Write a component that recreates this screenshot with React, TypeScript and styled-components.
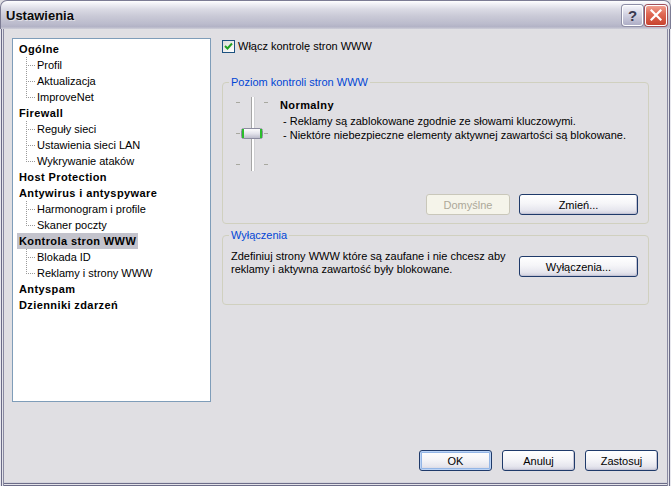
import React from "react";
import styled, { createGlobalStyle, css } from "styled-components";

const FONT = `"Liberation Sans", "DejaVu Sans", Arial, sans-serif`;

const GlobalStyle = createGlobalStyle`
  html, body { margin: 0; padding: 0; background: #e0dfe3; }
  body { font-family: ${FONT}; font-size: 11px; color: #000; }
  * { box-sizing: border-box; }
`;

const Window = styled.div`
  width: 671px;
  height: 486px;
  display: flex;
  flex-direction: column;
  background: #e0dfe3;
  overflow: hidden;
`;

const TitleBar = styled.div`
  flex: none;
  height: 29px;
  display: flex;
  align-items: center;
  padding: 0 3px 0 5px;
  border: 1px solid #7c7c94;
  border-bottom: none;
  border-radius: 7px 7px 0 0;
  background: linear-gradient(
    to bottom,
    #ffffff 0%,
    #f1f1f6 10%,
    #dadae4 30%,
    #c9c9d6 55%,
    #bcbccd 80%,
    #b3b3c6 92%,
    #cfcfd9 100%
  );
`;

const TitleText = styled.div`
  flex: 1;
  font: bold 13px ${FONT};
  color: #0a0a0a;
  text-shadow: 1px 1px 0 rgba(255, 255, 255, 0.5);
`;

const CapButton = styled.div<{ $close?: boolean }>`
  width: 21px;
  height: 21px;
  margin-left: 2px;
  border-radius: 3px;
  display: flex;
  align-items: center;
  justify-content: center;
  border: 1px solid #ffffff;
  box-shadow: 0 0 0 1px #8e8ea6;
  font: bold 15px ${FONT};
  color: #3a3a50;
  background: linear-gradient(to bottom, #f4f4fa 0%, #d2d2e2 45%, #aeaec6 100%);
  ${(p) =>
    p.$close &&
    css`
      width: 22px;
      box-shadow: 0 0 0 1px #a0505a;
      background: linear-gradient(to bottom, #f0a090 0%, #e06a55 40%, #c8432e 100%);
    `}
`;

const Body = styled.div`
  flex: 1;
  display: flex;
  flex-direction: column;
  padding: 9px 13px 15px 12px;
  box-shadow: inset 1px 0 0 #e8e8ee, inset 2px 0 0 #6c6c88, inset 3px 0 0 #e4e4ea,
    inset 4px 0 0 #8a8aa2, inset -1px 0 0 #e8e8ee, inset -2px 0 0 #6c6c88,
    inset -3px 0 0 #e4e4ea, inset -4px 0 0 #8a8aa2, inset 0 -1px 0 #6c6c88,
    inset 0 -2px 0 #e4e4ea, inset 0 -3px 0 #6c6c88, inset 0 -4px 0 #d4d4dc;
`;

const TopRow = styled.div`
  display: flex;
  gap: 11px;
  height: 364px;
`;

const Tree = styled.div`
  width: 199px;
  height: 364px;
  background: #fff;
  border: 1px solid #7f9db9;
  padding-top: 2px;
`;

const TreeRow = styled.div`
  height: 16px;
  display: flex;
  align-items: center;
  line-height: 16px;
  white-space: nowrap;
`;

const ParentLabel = styled.span<{ $selected?: boolean }>`
  margin-left: 4px;
  padding: 0 2px;
  font-weight: bold;
  letter-spacing: 0.4px;
  height: 16px;
  ${(p) => p.$selected && css`background: #c3c3cc;`}
`;

const DOT_V = "repeating-linear-gradient(to bottom, #9a9a9a 0 1px, transparent 1px 2px)";
const DOT_H = "repeating-linear-gradient(to right, #9a9a9a 0 1px, transparent 1px 2px)";

const Connector = styled.span<{ $last?: boolean }>`
  width: 11px;
  height: 16px;
  margin-left: 13px;
  flex: none;
  background-image: ${DOT_V}, ${DOT_H};
  background-repeat: no-repeat;
  background-position: 0 0, 0 8px;
  background-size: 1px ${(p) => (p.$last ? "9px" : "16px")}, 9px 1px;
`;

const ChildLabel = styled.span`
  padding-left: 0;
`;

const Main = styled.div`
  flex: 1;
  margin-right: 9px;
  display: flex;
  flex-direction: column;
`;

const CheckRow = styled.label`
  margin-top: 2px;
  height: 13px;
  display: flex;
  align-items: center;
  gap: 3px;
  line-height: 13px;
`;

const CheckBox = styled.span`
  width: 13px;
  height: 13px;
  flex: none;
  border: 1px solid #1c5180;
  background: linear-gradient(135deg, #dcdcd7 0%, #ffffff 100%);
  display: flex;
  align-items: center;
  justify-content: center;
`;

const Group = styled.section<{ $mt: number }>`
  margin-top: ${(p) => p.$mt}px;
  border: 1px solid #d0d0bf;
  border-radius: 4px;
  display: flex;
  flex-direction: column;
  align-items: stretch;
`;

const Legend = styled.span`
  align-self: flex-start;
  margin: -7px 0 0 6px;
  padding: 0 2px;
  color: #0046d5;
  line-height: 13px;
  height: 13px;
  background: #e0dfe3;
`;

const GroupBody = styled.div<{ $pad: string }>`
  padding: ${(p) => p.$pad};
`;

const SliderRow = styled.div`
  display: flex;
  gap: 11px;
`;

const LevelText = styled.div`
  padding-top: 1px;
`;

const LevelTitle = styled.div`
  font-weight: bold;
  letter-spacing: 0.4px;
  line-height: 14px;
`;

const LevelDesc = styled.div`
  margin-top: 2px;
  padding-left: 3px;
  line-height: 14px;
`;

const ButtonRow = styled.div<{ $mt?: number }>`
  display: flex;
  justify-content: flex-end;
  gap: 9px;
  margin-top: ${(p) => p.$mt ?? 0}px;
`;

const ExclRow = styled.div`
  display: flex;
  justify-content: space-between;
  align-items: flex-start;
`;

const ExclText = styled.div`
  line-height: 13px;
`;

const Button = styled.button<{ $w: number; $default?: boolean; $mt?: number }>`
  width: ${(p) => p.$w}px;
  height: 21px;
  margin-top: ${(p) => p.$mt ?? 0}px;
  padding: 0;
  font: 11px ${FONT};
  color: #000;
  border: 1px solid #1f3a6a;
  border-radius: 3px;
  background: linear-gradient(to bottom, #ffffff 0%, #f5f5f8 45%, #e6e6ee 80%, #d0d0de 100%);
  box-shadow: inset -1px -1px 0 #c4c4d4;
  ${(p) =>
    p.$default &&
    css`
      box-shadow: inset 0 0 0 1px #bcd4f6, inset 0 0 0 2px #94b6e6;
    `}
  &:disabled {
    color: #aca899;
    border-color: #c9c7ba;
    background: #f5f4ea;
    box-shadow: none;
  }
`;

const Footer = styled.div`
  margin-top: auto;
  display: flex;
  justify-content: flex-end;
  gap: 10px;
`;

const Slider = () => (
  <svg width="33" height="74" viewBox="0 0 33 74">
    <rect x="15" y="0" width="1" height="74" fill="#a6a6a6" />
    <rect x="16" y="0" width="2" height="74" fill="#ffffff" />
    <rect x="18" y="0" width="1" height="74" fill="#d0d0d4" />
    {[5, 36, 67].map((y) => (
      <g key={y} fill="#a8a8a0">
        <rect x="0" y={y} width="4" height="1" />
        <rect x="28" y={y} width="4" height="1" />
      </g>
    ))}
    <defs>
      <linearGradient id="thumb" x1="0" y1="0" x2="0" y2="1">
        <stop offset="0" stopColor="#ffffff" />
        <stop offset="0.5" stopColor="#e4e4ec" />
        <stop offset="1" stopColor="#b8b8c8" />
      </linearGradient>
    </defs>
    <rect x="5.5" y="31.5" width="21" height="10" rx="2" fill="url(#thumb)" stroke="#8c8ca0" />
    <rect x="6" y="32" width="2" height="9" fill="#2bbd2b" />
    <rect x="24" y="32" width="2" height="9" fill="#2bbd2b" />
  </svg>
);

type Node = { label: string; children?: string[]; selected?: boolean };

const tree: Node[] = [
  { label: "Ogólne", children: ["Profil", "Aktualizacja", "ImproveNet"] },
  { label: "Firewall", children: ["Reguły sieci", "Ustawienia sieci LAN", "Wykrywanie ataków"] },
  { label: "Host Protection" },
  { label: "Antywirus i antyspyware", children: ["Harmonogram i profile", "Skaner poczty"] },
  { label: "Kontrola stron WWW", children: ["Blokada ID", "Reklamy i strony WWW"], selected: true },
  { label: "Antyspam" },
  { label: "Dzienniki zdarzeń" },
];

export default function App() {
  return (
    <>
      <GlobalStyle />
      <Window>
        <TitleBar>
          <TitleText>Ustawienia</TitleText>
          <CapButton>?</CapButton>
          <CapButton $close>
            <svg width="12" height="12" viewBox="0 0 12 12">
              <path d="M1.5 1.5 L10.5 10.5 M10.5 1.5 L1.5 10.5" stroke="#fff" strokeWidth="2.2" strokeLinecap="square" />
            </svg>
          </CapButton>
        </TitleBar>
        <Body>
          <TopRow>
            <Tree>
              {tree.map((n) => (
                <React.Fragment key={n.label}>
                  <TreeRow>
                    <ParentLabel $selected={n.selected}>{n.label}</ParentLabel>
                  </TreeRow>
                  {n.children?.map((c, i) => (
                    <TreeRow key={c}>
                      <Connector $last={i === n.children!.length - 1} />
                      <ChildLabel>{c}</ChildLabel>
                    </TreeRow>
                  ))}
                </React.Fragment>
              ))}
            </Tree>
            <Main>
              <CheckRow>
                <CheckBox>
                  <svg width="9" height="9" viewBox="0 0 9 9">
                    <path d="M1 4 L3.5 6.5 L8 1.5" fill="none" stroke="#21a121" strokeWidth="2" />
                  </svg>
                </CheckBox>
                Włącz kontrolę stron WWW
              </CheckRow>
              <Group $mt={29}>
                <Legend>Poziom kontroli stron WWW</Legend>
                <GroupBody $pad="8px 10px 8px 13px">
                  <SliderRow>
                    <Slider />
                    <LevelText>
                      <LevelTitle>Normalny</LevelTitle>
                      <LevelDesc>
                        - Reklamy są zablokowane zgodnie ze słowami kluczowymi.
                        <br />- Niektóre niebezpieczne elementy aktywnej zawartości są blokowane.
                      </LevelDesc>
                    </LevelText>
                  </SliderRow>
                  <ButtonRow $mt={23}>
                    <Button $w={84} disabled>
                      Domyślne
                    </Button>
                    <Button $w={119}>Zmień...</Button>
                  </ButtonRow>
                </GroupBody>
              </Group>
              <Group $mt={11}>
                <Legend>Wyłączenia</Legend>
                <GroupBody $pad="8px 10px 27px 8px">
                  <ExclRow>
                    <ExclText>
                      Zdefiniuj strony WWW które są zaufane i nie chcesz aby
                      <br />
                      reklamy i aktywna zawartość były blokowane.
                    </ExclText>
                    <Button $w={119} $mt={6}>
                      Wyłączenia...
                    </Button>
                  </ExclRow>
                </GroupBody>
              </Group>
            </Main>
          </TopRow>
          <Footer>
            <Button $w={73} $default>
              OK
            </Button>
            <Button $w={73}>Anuluj</Button>
            <Button $w={73}>Zastosuj</Button>
          </Footer>
        </Body>
      </Window>
    </>
  );
}
